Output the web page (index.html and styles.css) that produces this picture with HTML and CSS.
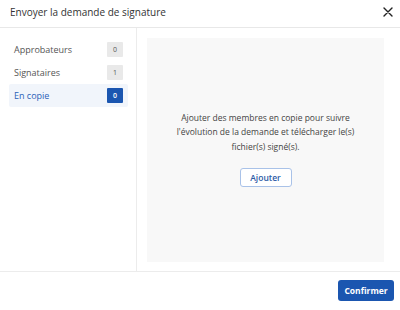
FILE: index.html
```html
<!DOCTYPE html>
<html lang="fr">
<head>
  <meta charset="UTF-8" />
  <meta name="viewport" content="width=device-width, initial-scale=1.0" />
  <title>Envoyer la demande de signature</title>
  <link rel="stylesheet" href="styles.css">
</head>
<body>

<div class="modal">
  <div class="modal-header">
    <span class="modal-title">Envoyer la demande de signature</span>
    <button class="close-btn" aria-label="Fermer">
      <svg width="10" height="10" viewBox="0 0 10 10">
        <path d="M1 1 L9 9 M9 1 L1 9" stroke="#222" stroke-width="1.4" stroke-linecap="round" fill="none"/>
      </svg>
    </button>
  </div>

  <div class="modal-body">
    <div class="sidebar">
      <div class="side-item">
        <span>Approbateurs</span>
        <span class="badge">0</span>
      </div>
      <div class="side-item">
        <span>Signataires</span>
        <span class="badge">1</span>
      </div>
      <div class="side-item active">
        <span>En copie</span>
        <span class="badge">0</span>
      </div>
    </div>

    <div class="content">
      <div class="panel">
        <p class="panel-text">Ajouter des membres en copie pour suivre l'évolution de la demande et télécharger le(s) fichier(s) signé(s).</p>
        <button class="btn-outline">Ajouter</button>
      </div>
    </div>
  </div>

  <div class="modal-footer">
    <button class="btn-primary">Confirmer</button>
  </div>
</div>

</body>
</html>
```

FILE: styles.css
```css
* { margin: 0; padding: 0; box-sizing: border-box; }

body {
  font-family: 'Open Sans', 'Noto Sans', sans-serif;
  background: #fff;
  width: 400px;
  height: 310px;
  overflow: hidden;
}

.modal {
  display: flex;
  flex-direction: column;
  height: 310px;
}

.modal-header {
  height: 28px;
  border-bottom: 1px solid #e8e8e8;
  display: flex;
  align-items: center;
  justify-content: space-between;
  padding: 0 7px 3px 10px;
}

.modal-title {
  font-size: 10px;
  color: #333;
}

.close-btn {
  background: none;
  border: none;
  width: 10px;
  height: 10px;
  display: flex;
  cursor: pointer;
}

.modal-body {
  flex: 1;
  display: flex;
}

.sidebar {
  width: 137px;
  border-right: 1px solid #ececec;
  padding: 10px 8px 0 9px;
}

.side-item {
  height: 23px;
  display: flex;
  align-items: center;
  justify-content: space-between;
  padding: 0 5px;
  font-size: 9px;
  color: #555;
  border-radius: 2px;
}

.side-item.active {
  background: #f1f5fb;
  color: #2c62b8;
}

.badge {
  width: 16px;
  height: 15px;
  background: #e9e9e9;
  color: #555;
  font-size: 7px;
  display: flex;
  align-items: center;
  justify-content: center;
  border-radius: 1px;
}

.side-item.active .badge {
  background: #1b56b0;
  color: #fff;
  font-weight: 600;
}

.content {
  flex: 1;
  padding: 10px 16px 9px 10px;
  display: flex;
}

.panel {
  flex: 1;
  background: #f8f8f8;
  display: flex;
  flex-direction: column;
  align-items: center;
  justify-content: center;
  padding-bottom: 2px;
}

.panel-text {
  font-size: 8.5px;
  line-height: 14.5px;
  color: #444;
  text-align: center;
  width: 196px;
  margin-bottom: 14px;
}

.btn-outline {
  font-family: inherit;
  background: #fff;
  border: 1px solid #a9c2e8;
  border-radius: 3px;
  color: #2c5ba6;
  font-size: 8.5px;
  font-weight: 600;
  width: 52px;
  height: 19px;
  cursor: pointer;
}

.modal-footer {
  height: 39px;
  border-top: 1px solid #ececec;
  display: flex;
  align-items: center;
  justify-content: flex-end;
  padding: 0 6px 1px 0;
}

.btn-primary {
  font-family: inherit;
  background: #1b56b0;
  border: none;
  border-radius: 3px;
  color: #fff;
  font-size: 8.5px;
  font-weight: 700;
  width: 56px;
  height: 21px;
  cursor: pointer;
}
```
